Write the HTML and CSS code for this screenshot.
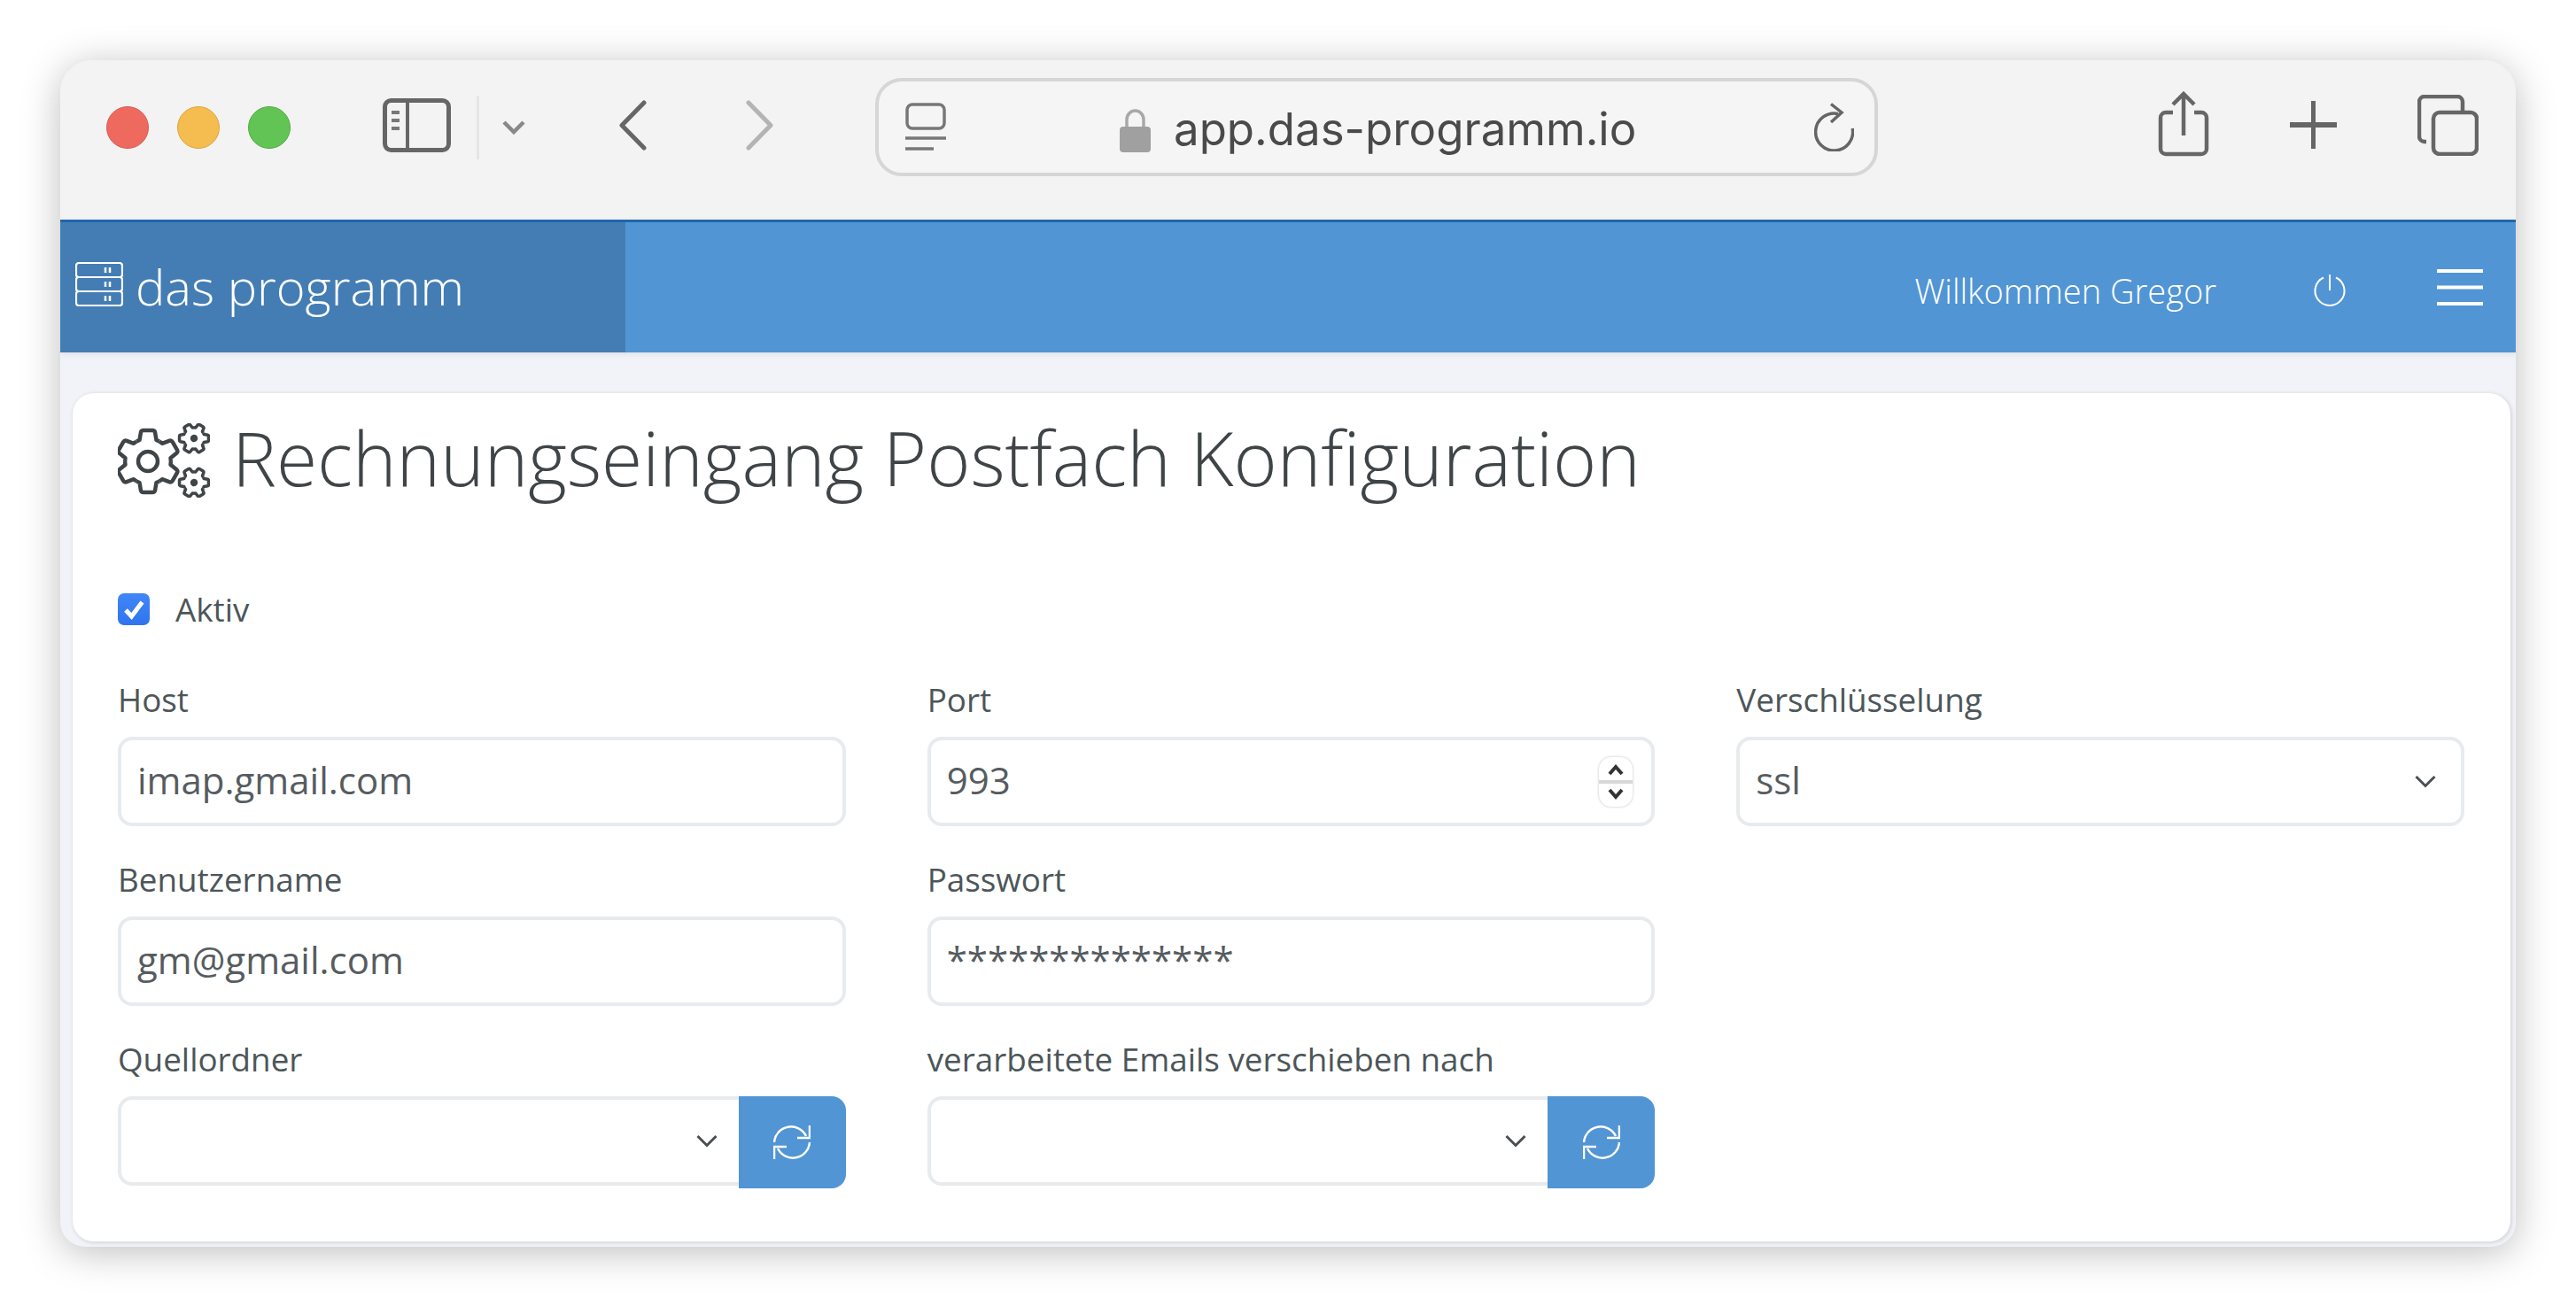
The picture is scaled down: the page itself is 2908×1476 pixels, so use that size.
FILE: index.html
```html
<!DOCTYPE html>
<html lang="de">
<head>
<meta charset="utf-8">
<title>das programm</title>
<link rel="stylesheet" href="styles.css">
</head>
<body>
<div class="window">
  <div class="toolbar">
    <span class="light red"></span><span class="light yellow"></span><span class="light green"></span>
    <svg class="ic-sidebar" viewBox="0 0 77 61"><rect x="2.5" y="2.5" width="72" height="56" rx="7" fill="none" stroke="#666" stroke-width="5"/><path d="M28 3v55" stroke="#666" stroke-width="4"/><path d="M10 16h9M10 25h9M10 34h9" stroke="#777" stroke-width="4"/></svg>
    <span class="tb-divider"></span>
    <svg class="ic-chev" viewBox="0 0 28 17"><path d="M3 3l11 11L25 3" fill="none" stroke="#888" stroke-width="4.5"/></svg>
    <svg class="ic-back" viewBox="0 0 32 57"><path d="M29 3L4 28.5 29 54" fill="none" stroke="#666" stroke-width="5" stroke-linecap="round" stroke-linejoin="round"/></svg>
    <svg class="ic-fwd" viewBox="0 0 32 57"><path d="M3 3l25 25.500L3 54" fill="none" stroke="#b4b4b4" stroke-width="5" stroke-linecap="round" stroke-linejoin="round"/></svg>
    <div class="urlbar">
      <svg class="ic-reader" viewBox="0 0 46 55"><rect x="2" y="2" width="42" height="27" rx="6" fill="none" stroke="#777" stroke-width="3.500"/><path d="M0 40h46M0 52h32" stroke="#777" stroke-width="3.500"/></svg>
      <svg class="ic-lock" viewBox="0 0 35 50"><path d="M8 24V13a9.500 10 0 0 1 19 0v11" fill="none" stroke="#a8a8a8" stroke-width="3.500"/><rect y="21" width="35" height="29" rx="4" fill="#a0a0a0"/></svg>
      <span class="url-text">app.das-programm.io</span>
      <svg class="ic-reload" viewBox="0 0 45 55"><path d="M27 12.500A21 21 0 1 0 43.200 29" fill="none" stroke="#666" stroke-width="3.500"/><path d="M19 1.500L31 11 19 22" fill="none" stroke="#666" stroke-width="3.500"/></svg>
    </div>
    <svg class="ic-share" viewBox="0 0 58 74"><path d="M17 24H9a6 6 0 0 0-6 6v35a6 6 0 0 0 6 6h40a6 6 0 0 0 6-6V30a6 6 0 0 0-6-6h-8" fill="none" stroke="#666" stroke-width="4.500"/><path d="M29 50V3M17 15L29 3l12 12" fill="none" stroke="#666" stroke-width="4.500"/></svg>
    <svg class="ic-plus" viewBox="0 0 53 54"><path d="M0 27h53" stroke="#666" stroke-width="6"/><path d="M26.500 0v54" stroke="#666" stroke-width="5"/></svg>
    <svg class="ic-tabs" viewBox="0 0 69 69"><path d="M10 53H8a6 6 0 0 1-6-6V8a6 6 0 0 1 6-6h37a6 6 0 0 1 6 6v10" fill="none" stroke="#666" stroke-width="4.500"/><rect x="18" y="20" width="49" height="47" rx="7" fill="none" stroke="#666" stroke-width="4.500"/></svg>
  </div>

  <header class="appbar">
    <div class="brand">
      <svg class="ic-server" viewBox="0 0 54 50">
        <g fill="none" stroke="#fff" stroke-width="2.200"><rect x="1" y="1" width="52" height="16" rx="3"/><rect x="1" y="17" width="52" height="16" rx="3"/><rect x="1" y="33" width="52" height="16" rx="3"/></g>
        <path d="M34 6v6M39 6v6M34 22v6M39 22v6M34 38v6M39 38v6" stroke="#fff" stroke-width="2.500"/>
      </svg>
      <span class="brand-name">das programm</span>
    </div>
    <div class="appbar-main">
      <span class="welcome">Willkommen Gregor</span>
      <svg class="ic-power" viewBox="0 0 36 36"><path d="M11 3.500A16.500 16.500 0 1 0 25 3.500M18 0v18" fill="none" stroke="#fff" stroke-width="2"/></svg>
      <svg class="ic-menu" viewBox="0 0 52 41"><path d="M0 2h52M0 20.500h52M0 39h52" stroke="#fff" stroke-width="4"/></svg>
    </div>
  </header>

  <main class="content">
    <section class="card">
      <h1 class="page-title">
        <svg class="ic-gears" viewBox="0 0 104 84">
          <defs>
            <path id="seg" d="M-13-22.500L-9.500-24-8-33Q-7.500-35-5-35H5Q7.500-35 8-33L9.500-24 13-22.500" fill="none" stroke-linejoin="round"/>
            <g id="gear">
              <use href="#seg"/><use href="#seg" transform="rotate(60)"/><use href="#seg" transform="rotate(120)"/>
              <use href="#seg" transform="rotate(180)"/><use href="#seg" transform="rotate(240)"/><use href="#seg" transform="rotate(300)"/>
            </g>
          </defs>
          <g stroke="#3f4447" stroke-width="4.500" transform="translate(34 43)"><use href="#gear"/><circle r="11" fill="none"/></g>
          <g stroke="#3f4447" stroke-width="7.500" transform="translate(86 17) rotate(30) scale(.47)"><use href="#gear"/><circle r="9" fill="#3f4447" stroke="none"/></g>
          <g stroke="#3f4447" stroke-width="7.500" transform="translate(86 67) rotate(30) scale(.47)"><use href="#gear"/><circle r="9" fill="#3f4447" stroke="none"/></g>
        </svg>
        <span>Rechnungseingang Postfach Konfiguration</span>
      </h1>

      <label class="check-row">
        <span class="checkbox"><svg viewBox="0 0 36 36"><path d="M9 19l6.500 7L27.500 10" fill="none" stroke="#fff" stroke-width="5"/></svg></span>
        <span>Aktiv</span>
      </label>

      <div class="form-grid">
        <div class="form-group">
          <label class="form-label">Host</label>
          <div class="field"><input class="control" type="text" value="imap.gmail.com"></div>
        </div>
        <div class="form-group">
          <label class="form-label">Port</label>
          <div class="field">
            <input class="control" type="text" value="993">
            <span class="spinner">
              <svg viewBox="0 0 38 56"><path d="M12 19l7-8 7 8" fill="none" stroke="#333" stroke-width="4"/><path d="M12 37l7 8 7-8" fill="none" stroke="#333" stroke-width="4"/><path d="M0 28h38" stroke="#d8d8d8" stroke-width="4"/></svg>
            </span>
          </div>
        </div>
        <div class="form-group">
          <label class="form-label">Verschlüsselung</label>
          <div class="field">
            <select class="control"><option>ssl</option></select>
            <svg class="ic-select" viewBox="0 0 24 15"><path d="M1.500 2L12 12.500 22.500 2" fill="none" stroke="#4a4f52" stroke-width="3"/></svg>
          </div>
        </div>
        <div class="form-group">
          <label class="form-label">Benutzername</label>
          <div class="field"><input class="control" type="text" value="gm@gmail.com"></div>
        </div>
        <div class="form-group">
          <label class="form-label">Passwort</label>
          <div class="field"><input class="control" type="text" value="**************"></div>
        </div>
        <div class="form-group"></div>
        <div class="form-group">
          <label class="form-label">Quellordner</label>
          <div class="input-group">
            <div class="field joined">
              <select class="control"><option></option></select>
              <svg class="ic-select" viewBox="0 0 24 15"><path d="M1.500 2L12 12.500 22.500 2" fill="none" stroke="#4a4f52" stroke-width="3"/></svg>
            </div>
            <button class="btn-sync" type="button"><svg viewBox="0 0 42 40"><path d="M1 20A19 19 0 0 1 37 13M41 20A19 19 0 0 1 5 27" fill="none" stroke="#fff" stroke-width="2.500"/><path d="M41 1v14H27M1 39V25h14" fill="none" stroke="#fff" stroke-width="2.500"/></svg></button>
          </div>
        </div>
        <div class="form-group">
          <label class="form-label">verarbeitete Emails verschieben nach</label>
          <div class="input-group">
            <div class="field joined">
              <select class="control"><option></option></select>
              <svg class="ic-select" viewBox="0 0 24 15"><path d="M1.500 2L12 12.500 22.500 2" fill="none" stroke="#4a4f52" stroke-width="3"/></svg>
            </div>
            <button class="btn-sync" type="button"><svg viewBox="0 0 42 40"><path d="M1 20A19 19 0 0 1 37 13M41 20A19 19 0 0 1 5 27" fill="none" stroke="#fff" stroke-width="2.500"/><path d="M41 1v14H27M1 39V25h14" fill="none" stroke="#fff" stroke-width="2.500"/></svg></button>
          </div>
        </div>
      </div>
    </section>
  </main>
</div>
</body>
</html>
```
FILE: styles.css
```css
* { box-sizing: border-box; }
html, body { margin: 0; height: 100%; background: #fff; overflow: hidden; }
body { padding: 68px; font-family: "Open Sans", sans-serif; }

.window {
  width: 2772px;
  height: 1340px;
  display: flex;
  flex-direction: column;
  border-radius: 36px 36px 28px 28px;
  overflow: hidden;
  background: #f1f3f8;
  box-shadow: 0 6px 44px rgba(0, 0, 0, .26);
}

/* browser chrome */
.toolbar {
  flex: none;
  height: 180px;
  padding: 20px 0 49px 52px;
  display: flex;
  align-items: center;
  background: #f3f3f3;
}
.light { width: 48px; height: 48px; border-radius: 50%; margin-right: 32px; }
.light.red { background: #ee6a5f; border: 1px solid #dc5c50; }
.light.yellow { background: #f5bd4f; border: 1px solid #dfa53c; }
.light.green { background: #61c454; border: 1px solid #51ad45; margin-right: 0; }
.toolbar svg { flex: none; display: block; }
.ic-sidebar { width: 77px; height: 61px; margin-left: 104px; margin-top: -4px; }
.tb-divider { width: 3px; height: 72px; margin-left: 29px; background: #e5e5e5; }
.ic-chev { width: 28px; height: 17px; margin-left: 25px; }
.ic-back { width: 32px; height: 57px; margin-left: 104px; margin-top: -4px; }
.ic-fwd { width: 32px; height: 57px; margin-left: 112px; margin-top: -4px; }
.urlbar {
  flex: none;
  width: 1132px;
  height: 111px;
  margin-left: 114px;
  padding-left: 30px;
  display: flex;
  align-items: center;
  background: #f5f5f5;
  border: 4px solid #d6d6d6;
  border-radius: 30px;
}
.ic-reader { width: 46px; height: 55px; }
.ic-lock { width: 35px; height: 50px; margin-left: 196px; margin-top: 6px; }
.url-text {
  margin-left: 26px;
  margin-top: 4px;
  font-family: Inter, sans-serif;
  font-size: 51px;
  color: #4a4a4a;
  line-height: 1;
}
.ic-reload { width: 45px; height: 55px; margin-left: auto; margin-right: 23px; }
.ic-share { width: 58px; height: 74px; margin-left: 316px; margin-top: -7px; }
.ic-plus { width: 53px; height: 54px; margin-left: 91px; margin-top: -5px; }
.ic-tabs { width: 69px; height: 69px; margin-left: 91px; margin-top: -4px; }

/* app bar */
.appbar {
  flex: none;
  height: 150px;
  display: flex;
  border-top: 3px solid #2067a9;
  color: #fff;
  box-shadow: 0 2px 6px rgba(0, 0, 0, .08);
}
.brand {
  flex: none;
  width: 638px;
  padding-left: 17px;
  display: flex;
  align-items: center;
  gap: 14px;
  background: #447db4;
}
.ic-server { width: 54px; height: 50px; margin-top: -7px; flex: none; }
.brand-name { font-weight: 300; font-size: 56px; line-height: 1; margin-top: -3px; }
.appbar-main {
  flex: 1;
  display: flex;
  align-items: center;
  justify-content: flex-end;
  padding-right: 37px;
  background: #5295d5;
}
.welcome { font-weight: 300; font-size: 38px; margin-top: 7px; }
.ic-power { width: 36px; height: 36px; margin-left: 110px; margin-top: 6px; flex: none; }
.ic-menu { width: 52px; height: 41px; margin-left: 103px; flex: none; }

/* content */
.content { flex: 1; min-height: 0; padding: 46px 6px 6px 14px; display: flex; }
.card {
  flex: 1;
  padding: 17px 52px 0 51px;
  background: #fff;
  border-radius: 24px;
  box-shadow: 1px 1px 5px rgba(0, 0, 0, .16);
}
.page-title {
  margin: 0;
  height: 112px;
  display: flex;
  align-items: center;
  gap: 25px;
  font-weight: 300;
  font-size: 84px;
  line-height: 112px;
  color: #3f4447;
}
.ic-gears { width: 104px; height: 84px; flex: none; margin-top: 6px; }

.check-row {
  margin-top: 97px;
  height: 36px;
  display: flex;
  align-items: center;
  gap: 29px;
  font-size: 36.8px;
  color: #4c5659;
}
.checkbox { width: 36px; height: 36px; border-radius: 7px; background: linear-gradient(#4187f7, #2f74ee); }
.checkbox svg { display: block; }

.form-grid {
  margin-top: 59px;
  display: grid;
  grid-template-columns: repeat(3, 1fr);
  column-gap: 92px;
  row-gap: 35px;
}
.form-group { min-width: 0; }
.form-label {
  display: block;
  height: 50px;
  margin-bottom: 17px;
  font-size: 36.8px;
  line-height: 50px;
  color: #4c5659;
}
.field {
  height: 101px;
  padding: 0 18px;
  display: flex;
  align-items: center;
  background: #fff;
  border: 4px solid #e8ebee;
  border-radius: 16px;
}
.control {
  flex: 1;
  min-width: 0;
  padding: 0 0 4px;
  border: 0;
  outline: 0;
  background: transparent;
  font-family: "Open Sans", sans-serif;
  font-size: 42px;
  color: #565c60;
  appearance: none;
}
.spinner { flex: none; width: 38px; height: 56px; margin-right: 3px; border-radius: 14px; box-shadow: 0 0 3px rgba(0, 0, 0, .25); overflow: hidden; }
.spinner svg { display: block; width: 38px; height: 56px; }
.ic-select { flex: none; width: 24px; height: 15px; margin-right: 10px; }
.input-group { display: flex; height: 104px; }
.field.joined { flex: 1; min-width: 0; border-right: 0; border-radius: 16px 0 0 16px; }
.field.joined .ic-select { margin-right: 6px; }
.btn-sync {
  flex: none;
  width: 121px;
  height: 104px;
  padding: 0;
  display: flex;
  align-items: center;
  justify-content: center;
  border: 0;
  background: #5295d5;
  border-radius: 0 16px 16px 0;
}
.btn-sync svg { display: block; width: 42px; height: 40px; }
```
